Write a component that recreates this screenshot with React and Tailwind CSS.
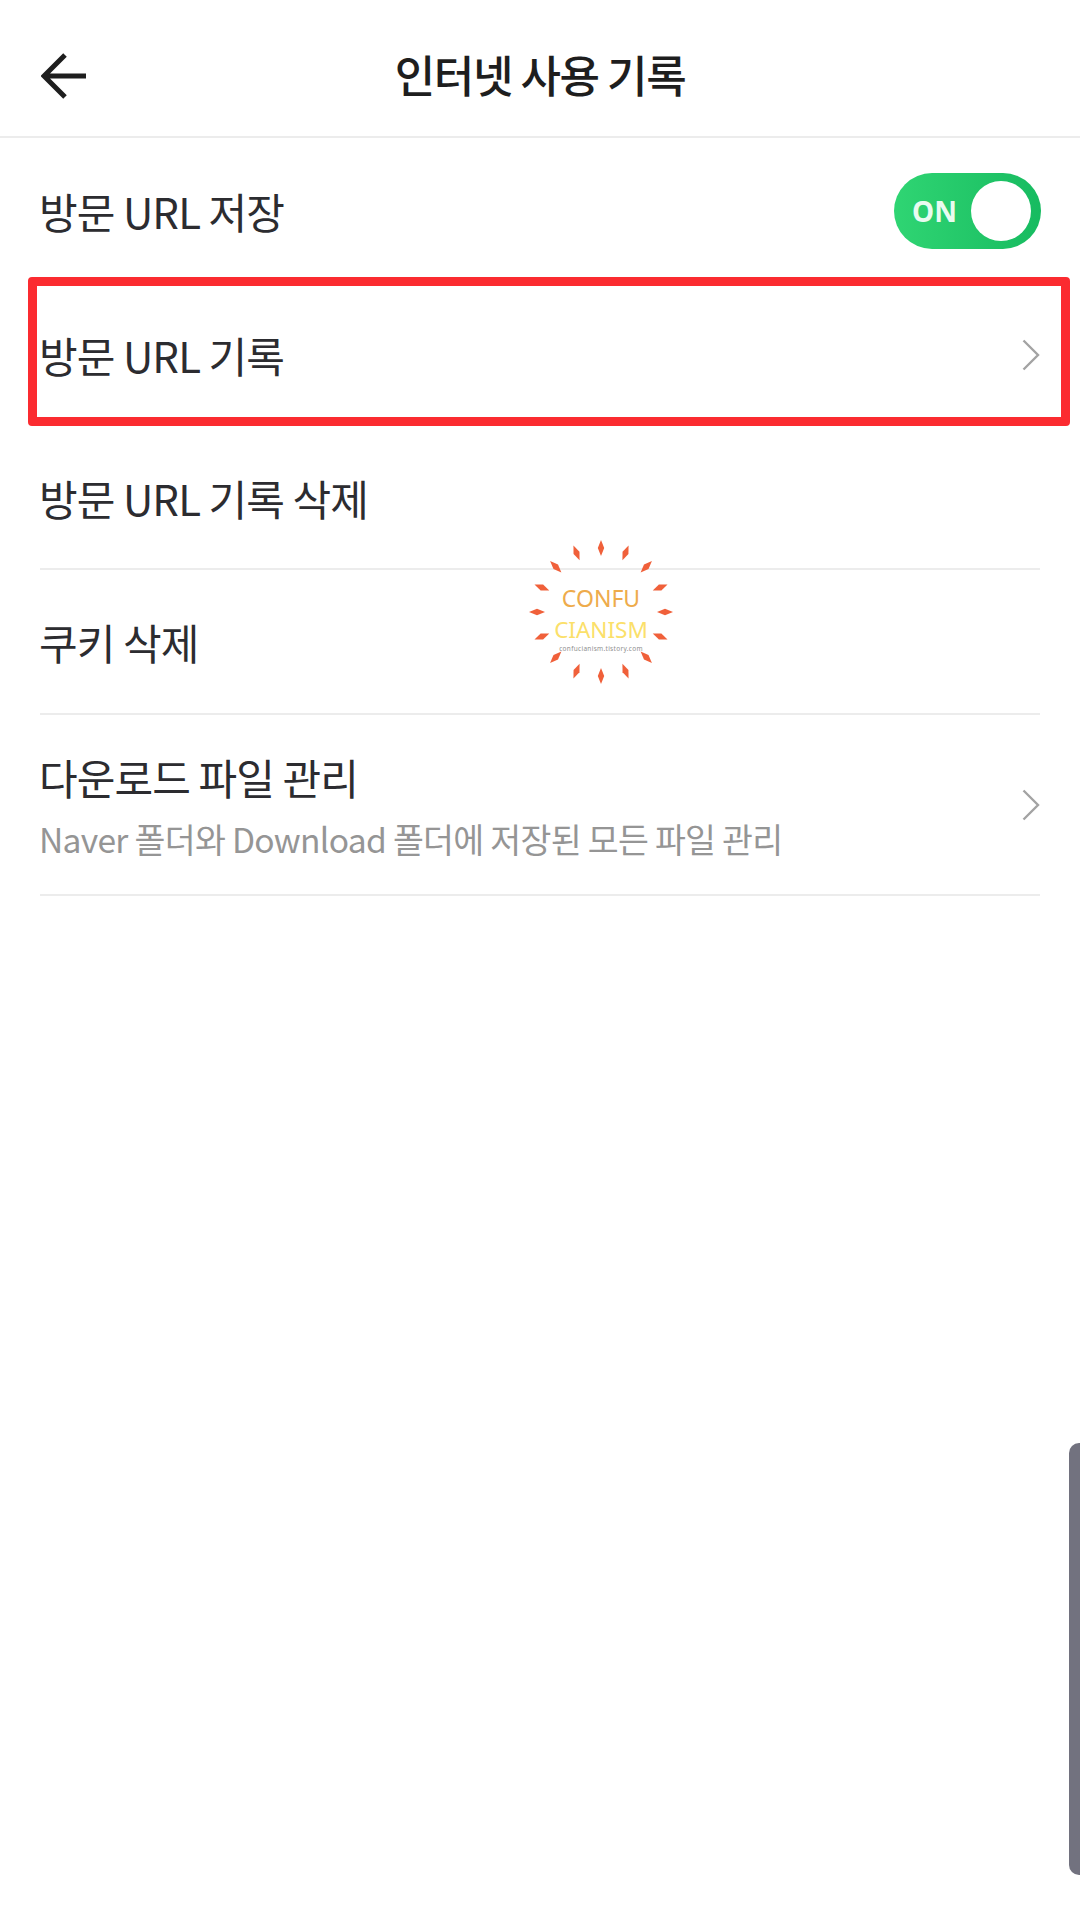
import React from "react";

const FONT = "font-['Noto_Sans_CJK_KR','Noto_Sans',sans-serif]";

function Chevron() {
  return (
    <svg width="18" height="32" viewBox="0 0 18 32" fill="none" className="shrink-0">
      <path d="M1.5 1.5 L16 16 L1.5 30.5" stroke="#a3a3a3" strokeWidth="2.4" />
    </svg>
  );
}

function Toggle() {
  return (
    <div className="flex items-center justify-between w-[147px] h-[76px] mr-[-1px] rounded-full bg-gradient-to-r from-[#2fd573] to-[#16bb60] pl-[18px] pr-[10px]">
      <span className="text-[28px] font-bold leading-none text-[#e9fbf0] font-['Noto_Sans',sans-serif]">ON</span>
      <div className="w-[60px] h-[60px] rounded-full bg-white" />
    </div>
  );
}

// watermark rays + logo text
function Watermark() {
  const rays = Array.from({ length: 16 }, (_, i) => i * 22.5);
  return (
    <div className="absolute left-[527px] top-[538px] w-[148px] h-[148px]">
      <svg width="148" height="148" viewBox="-74 -74 148 148" className="absolute inset-0">
        {rays.map((a) => (
          <polygon
            key={a}
            points="0,-72 3.2,-64 0,-56 -3.2,-64"
            fill="#f0603a"
            transform={`rotate(${a})`}
          />
        ))}
      </svg>
      <div className="absolute inset-0 flex flex-col items-center font-['Noto_Sans',sans-serif]">
        <span className="mt-[45px] text-[23px] leading-[30px] text-[#eeab4b]">CONFU</span>
        <span className="mt-[2px] text-[22.5px] leading-[30px] text-[#fbe06a]">CIANISM</span>
        <span className="mt-[-1px] text-[6.5px] leading-[9px] tracking-[0.3px] text-[#8f8f8f]">confucianism.tistory.com</span>
      </div>
    </div>
  );
}

function Row({ label, right, border, className = "", children }) {
  return (
    <div className={`relative mx-10 flex items-center justify-between ${border ? "border-b-2 border-[#ececec]" : ""} ${className}`}>
      <span className="ml-[-1px] text-[42px] leading-[48px] tracking-[-0.9px] text-[#2c2c30]">{label}</span>
      {right}
      {children}
    </div>
  );
}

export default function App() {
  return (
    <div className={`relative w-[1080px] h-[1920px] overflow-hidden bg-white ${FONT}`}>
      {/* header */}
      <header className="relative flex items-center justify-center h-[138px] pt-[12px] border-b-2 border-[#ececec]">
        <svg width="48" height="48" viewBox="0 0 48 48" fill="none" className="absolute left-[41px] top-[52px]">
          <path d="M45 24 H4 M24 3 L3 24 L24 45" stroke="#1e1e1e" strokeWidth="5" />
        </svg>
        <h1 className="text-[44px] font-medium leading-none tracking-[-1.4px] text-[#1e1e1e]">인터넷 사용 기록</h1>
      </header>

      <main>
        <Row label="방문 URL 저장" right={<Toggle />} className="h-[145px]" />
        <Row label="방문 URL 기록" right={<Chevron />} className="h-[144px]">
          <div className="absolute left-[-12px] right-[-30px] top-[-6px] bottom-[1px] rounded-[4px] border-[9px] border-[#fb2b30]" />
        </Row>
        <Row label="방문 URL 기록 삭제" border className="h-[143px]" />
        <Row label="쿠키 삭제" border className="h-[145px]" />
        <div className="mx-10 flex items-center justify-between h-[181px] border-b-2 border-[#ececec]">
          <div className="flex flex-col ml-[-1px]">
            <span className="text-[42px] leading-[48px] tracking-[-0.9px] text-[#2c2c30]">다운로드 파일 관리</span>
            <span className="mt-[18px] mb-[-2px] text-[33.6px] leading-[40px] tracking-[-0.7px] text-[#959595]">Naver 폴더와 Download 폴더에 저장된 모든 파일 관리</span>
          </div>
          <Chevron />
        </div>
      </main>

      <Watermark />

      {/* scroll handle */}
      <div className="absolute right-0 top-[1443px] w-[11px] h-[432px] rounded-l-[10px] bg-[#72727f]" />
    </div>
  );
}
